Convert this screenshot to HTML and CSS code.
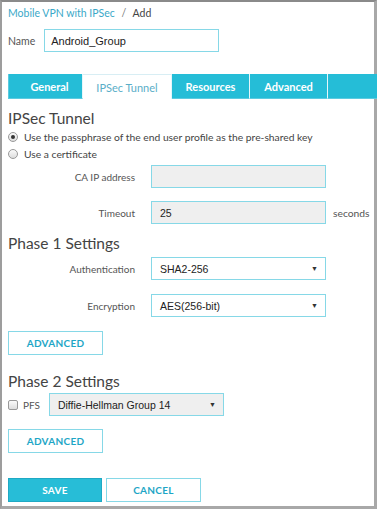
FILE: index.html
```html
<!DOCTYPE html>
<html lang="en">
<head>
  <meta charset="UTF-8">
  <title>Mobile VPN with IPSec / Add</title>
  <link rel="stylesheet" href="styles.css">
</head>
<body>
<div class="frame">

  <div class="crumbs">
    <a href="#">Mobile VPN with IPSec</a>
    <span class="sep">/</span>
    <span class="here">Add</span>
  </div>

  <div class="name-row">
    <label class="name-label">Name</label>
    <div class="field name-field">Android_Group</div>
  </div>

  <div class="tabs">
    <div class="tab">General</div>
    <div class="tab active">IPSec Tunnel</div>
    <div class="tab">Resources</div>
    <div class="tab">Advanced</div>
    <div class="tab filler"></div>
  </div>

  <h2 class="section">IPSec Tunnel</h2>
  <div class="radio-row">
    <span class="radio checked"></span>
    <span>Use the passphrase of the end user profile as the pre-shared key</span>
  </div>
  <div class="radio-row">
    <span class="radio"></span>
    <span>Use a certificate</span>
  </div>

  <div class="form-grid grid-ipsec">
    <div class="lbl">CA IP address</div>
    <div class="field grey"></div>
    <div></div>
    <div class="lbl">Timeout</div>
    <div class="field grey">25</div>
    <div class="unit">seconds</div>
  </div>

  <h2 class="section">Phase 1 Settings</h2>
  <div class="form-grid grid-phase1">
    <div class="lbl">Authentication</div>
    <div class="field select"><span>SHA2-256</span><span class="caret">&#9660;</span></div>
    <div></div>
    <div class="lbl">Encryption</div>
    <div class="field select"><span>AES(256-bit)</span><span class="caret">&#9660;</span></div>
    <div></div>
  </div>
  <button class="btn outline adv-1">ADVANCED</button>

  <h2 class="section section-2">Phase 2 Settings</h2>
  <div class="pfs-row">
    <span class="check"></span>
    <span class="pfs-label">PFS</span>
    <div class="field select grey pfs-select"><span>Diffie-Hellman Group 14</span><span class="caret">&#9660;</span></div>
  </div>
  <button class="btn outline adv-2">ADVANCED</button>

  <div class="actions">
    <button class="btn solid">SAVE</button>
    <button class="btn outline">CANCEL</button>
  </div>

</div>
</body>
</html>
```

FILE: styles.css
```css
:root{
  --teal:#25bdd7;
  --teal-text:#1ea6c6;
  --field-border:#86d8e7;
  --text:#444;
  --label:#555;
}

*{ box-sizing:border-box; }
html,body{
  margin:0; padding:0;
  width:377px; height:509px;
  background:#fff;
  font-family:Lato, "Open Sans", sans-serif;
  color:var(--text);
  overflow:hidden;
}

.frame{
  width:377px; height:509px;
  border-left:2px solid #9d9d9d;
  border-top:2px solid #8a8a8a;
  border-right:3px solid #a8a8a8;
  border-bottom:3px solid #a8a8a8;
  padding:0 0 0 6px;
}

/* ================= BREADCRUMB ================= */
.crumbs{
  font-size:10.5px;
  line-height:14px;
  padding-top:4px;
  height:18px;
}
.crumbs a{ color:#3aa8c8; text-decoration:none; }
.crumbs .sep{ color:#777; margin:0 4px; }
.crumbs .here{ color:#444; }

/* ================= NAME ================= */
.name-row{
  display:flex; align-items:center;
  margin-top:9px;
  gap:9px;
}
.name-label{ font-size:10.5px; color:var(--label); }

.field{
  height:23px;
  border:1px solid var(--field-border);
  background:#fff;
  font-family:"Liberation Sans", Arial, sans-serif;
  font-size:10.5px;
  color:#222;
  padding:0 8px;
  display:flex; align-items:center;
}
.name-field{ width:175px; padding-left:6px; font-size:11px; }
.field.grey{ background:#efefef; }
.field.select{ justify-content:space-between; }
.caret{ font-size:7px; color:#333; margin-right:-1px; }

/* ================= TABS ================= */
.tabs{
  display:flex;
  margin-top:22px;
  margin-right:-3px;
  height:25px;
}
.tab{
  width:78px;
  background:var(--teal);
  color:#fff;
  font-size:11px;
  font-weight:700;
  display:flex; align-items:center; justify-content:center;
  border-right:1px solid #e6f6fa;
  border-bottom:1px solid #5ccbe0;
}
.tab:first-child{ width:75px; padding-left:8px; border-left:1px solid #5ccbe0; }
.tab.active{
  width:89px;
  background:#fff;
  color:#5aaec8;
  font-weight:400;
  border-top:1px solid #d8eef4;
  border-bottom:none;
}
.tab.filler{ flex:1; border-right:none; }

/* ================= SECTIONS ================= */
.section{
  font-size:15.5px;
  font-weight:400;
  color:#444;
  margin:9px 0 0;
  line-height:20px;
}

.radio-row{
  display:flex; align-items:center; gap:6px;
  font-size:10.3px;
  color:#444;
  height:17px;
}
.radio{
  width:10px; height:10px;
  border-radius:50%;
  border:1px solid #999;
  background:linear-gradient(#fafafa,#ddd);
  position:relative;
}
.radio.checked::after{
  content:"";
  position:absolute;
  left:2px; top:2px;
  width:4px; height:4px;
  border-radius:50%;
  background:#333;
}

.form-grid{
  display:grid;
  grid-template-columns:127px 175px auto;
  column-gap:16px;
  row-gap:13px;
  align-items:center;
}
.grid-ipsec{ margin-top:3px; }
.grid-phase1{ margin-top:4px; row-gap:14px; }
.lbl{
  text-align:right;
  font-size:10px;
  color:var(--label);
}
.unit{
  font-size:10.3px;
  color:#555;
  margin-left:-9px;
}

/* ================= BUTTONS ================= */
.btn{
  width:95px; height:24px;
  font-family:Lato, "Open Sans", sans-serif;
  font-size:10px;
  font-weight:700;
  letter-spacing:.3px;
  border:1px solid var(--field-border);
  background:#fff;
  color:var(--teal-text);
  padding:0;
  display:block;
}
.btn.solid{
  width:94px;
  background:#27bdd7;
  border-color:#1fa9c4;
  color:#fff;
}
.adv-1{ margin-top:14px; }
.adv-2{ margin-top:13px; }

.section-2{ margin-top:16px; }

.pfs-row{
  display:flex; align-items:center;
  margin-top:2px;
}
.check{
  width:10px; height:10px;
  border:1px solid #999;
  border-radius:2px;
  background:linear-gradient(#fafafa,#ddd);
}
.pfs-label{
  font-size:10px;
  color:#555;
  margin-left:5px;
  margin-right:9px;
}
.pfs-select{ width:175px; }

.actions{
  display:flex; gap:4px;
  margin-top:25px;
}
```
